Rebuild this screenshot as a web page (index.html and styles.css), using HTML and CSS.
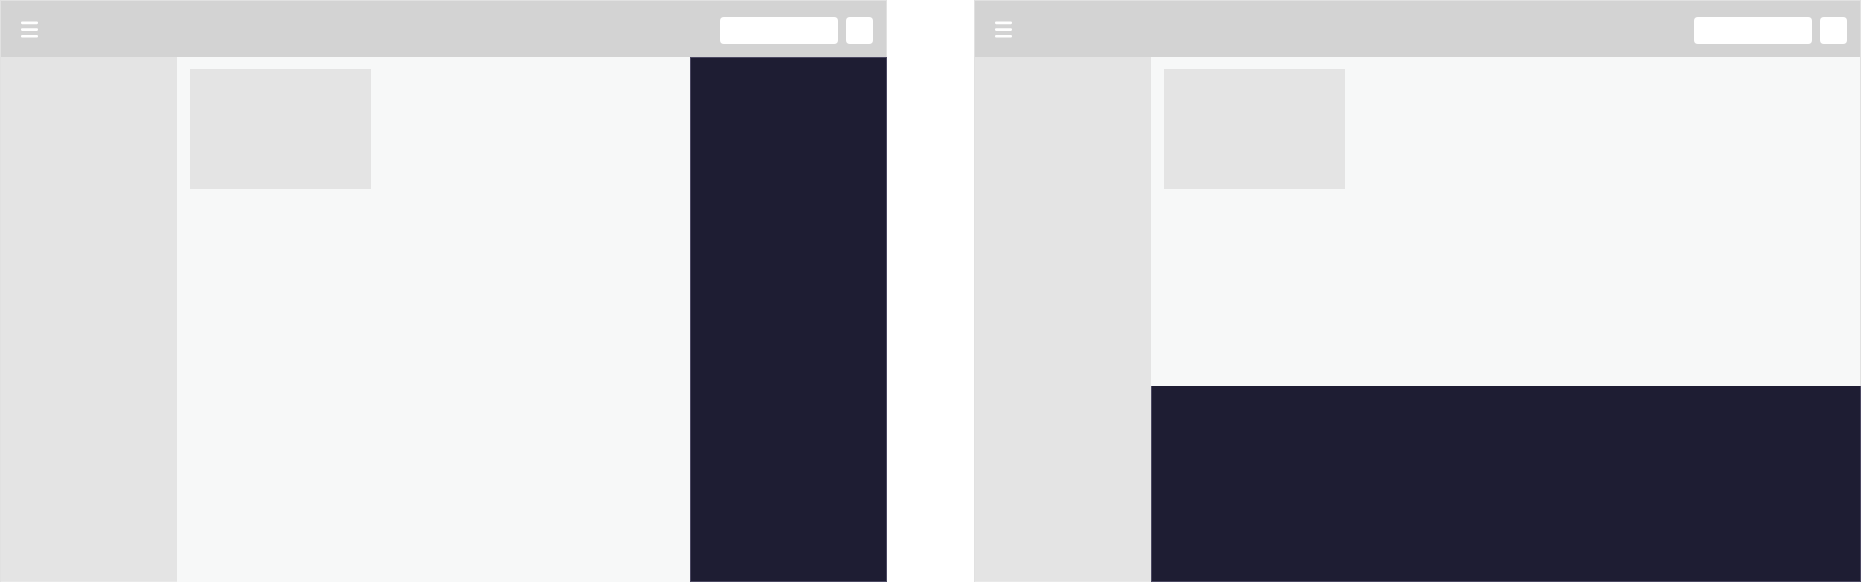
FILE: index.html
```html
<!DOCTYPE html>
<html lang="en">
<head>
<meta charset="utf-8">
<title>Layouts</title>
<link rel="stylesheet" href="styles.css">
</head>
<body>
<div class="stage">
  <div class="frame">
    <header class="topbar">
      <svg class="menu" width="17" height="17" viewBox="0 0 17 17">
        <rect x="0" y="0.5" width="17" height="2.7" rx="1.1" fill="#fff"/>
        <rect x="0" y="7.2" width="17" height="2.7" rx="1.1" fill="#fff"/>
        <rect x="0" y="13.9" width="17" height="2.7" rx="1.1" fill="#fff"/>
      </svg>
      <div class="actions">
        <div class="search"></div>
        <div class="btn"></div>
      </div>
    </header>
    <div class="body">
      <aside class="sidebar"></aside>
      <main class="main"><div class="card"></div></main>
      <section class="panel panel-side"></section>
    </div>
  </div>
  <div class="frame">
    <header class="topbar">
      <svg class="menu" width="17" height="17" viewBox="0 0 17 17">
        <rect x="0" y="0.5" width="17" height="2.7" rx="1.1" fill="#fff"/>
        <rect x="0" y="7.2" width="17" height="2.7" rx="1.1" fill="#fff"/>
        <rect x="0" y="13.9" width="17" height="2.7" rx="1.1" fill="#fff"/>
      </svg>
      <div class="actions">
        <div class="search"></div>
        <div class="btn"></div>
      </div>
    </header>
    <div class="body">
      <aside class="sidebar"></aside>
      <div class="stack">
        <main class="main"><div class="card"></div></main>
        <section class="panel panel-bottom"></section>
      </div>
    </div>
  </div>
</div>
</body>
</html>
```
FILE: styles.css
```css
html, body {
  margin: 0;
  padding: 0;
  background: #ffffff;
  font-family: "Liberation Sans", Arial, sans-serif;
}
.stage {
  display: flex;
  justify-content: space-between;
  width: 1861px;
  height: 582px;
  overflow: hidden;
}
.frame {
  box-sizing: border-box;
  width: 887px;
  height: 582px;
  border: 1px solid #e1e1e1;
  border-bottom: none;
  display: flex;
  flex-direction: column;
  background: #f7f8f8;
}
.topbar {
  flex: 0 0 56px;
  background: #d3d3d3;
  display: flex;
  align-items: center;
  justify-content: space-between;
  padding: 0 13px 0 20px;
}
.menu {
  display: block;
  margin-top: 1px;
}
.actions {
  display: flex;
  align-items: center;
  gap: 8px;
  margin-top: 3px;
}
.search {
  width: 118px;
  height: 27px;
  background: #ffffff;
  border-radius: 4px;
}
.btn {
  width: 27px;
  height: 27px;
  background: #ffffff;
  border-radius: 4px;
}
.body {
  flex: 1;
  display: flex;
  min-height: 0;
}
.sidebar {
  flex: 0 0 176px;
  background: #e4e4e4;
  border-bottom: 1px solid #e9e9e9;
}
.main {
  flex: 1;
  background: #f7f8f8;
  padding: 12px 13px;
}
.card {
  width: 181px;
  height: 120px;
  background: #e4e4e4;
}
.panel {
  box-sizing: border-box;
  background: #1e1d33;
  border: 1px solid #4b4862;
}
.panel-side {
  flex: 0 0 197px;
  margin-right: -1px;
}
.stack {
  flex: 1;
  display: flex;
  flex-direction: column;
}
.panel-bottom {
  flex: 0 0 196px;
  margin-right: -1px;
  border-top: none;
}
```
